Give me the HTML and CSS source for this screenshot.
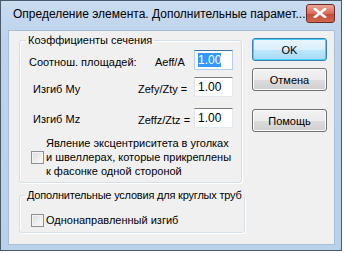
FILE: index.html
```html
<!DOCTYPE html>
<html lang="ru">
<head>
	<meta charset="UTF-8">
	<title>Определение элемента</title>
	<link rel="stylesheet" href="styles.css">
</head>
<body>
	<div id="window">
		<div class="titlebar">
			<span class="title">Определение элемента. Дополнительные парамет...</span>
			<span class="close">
				<svg width="14" height="10" viewBox="0 0 14 10">
					<path d="M2 1 L12 9 M12 1 L2 9" stroke="#fff" stroke-width="2.6" stroke-linecap="square"/>
				</svg>
			</span>
		</div>
		<div class="client">
			<div class="left">
				<fieldset class="group group-coef">
					<legend>Коэффициенты сечения</legend>
					<div class="row row-first">
						<span class="name name-area">Соотнош. площадей:</span>
						<span class="formula formula-area">Aeff/A</span>
						<span class="edit focused"><span class="sel">1.00</span></span>
					</div>
					<div class="row row-second">
						<span class="name name-bend">Изгиб My</span>
						<span class="formula">Zefy/Zty =</span>
						<span class="edit">1.00</span>
					</div>
					<div class="row row-third">
						<span class="name name-bend">Изгиб Mz</span>
						<span class="formula">Zeffz/Ztz =</span>
						<span class="edit">1.00</span>
					</div>
					<div class="check check-ecc">
						<span class="box"></span>
						<span class="check-text">Явление эксцентриситета в уголках<br>и швеллерах, которые прикреплены<br>к фасонке одной стороной</span>
					</div>
				</fieldset>
				<fieldset class="group group-pipe">
					<legend>Дополнительные условия для круглых труб</legend>
					<div class="check check-dir">
						<span class="box"></span>
						<span class="check-text">Однонаправленный изгиб</span>
					</div>
				</fieldset>
			</div>
			<div class="right">
				<button class="btn btn-default">OK</button>
				<button class="btn">Отмена</button>
				<button class="btn btn-help">Помощь</button>
			</div>
		</div>
	</div>
</body>
</html>
```

FILE: styles.css
```css
html, body {
	margin: 0;
	padding: 0;
	background-color: #fff;
}
body {
	font-family: "Liberation Sans", Arial, sans-serif;
	font-size: 11px;
	color: #000;
	white-space: nowrap;
}
#window {
	width: 340px;
	height: 249px;
	border: 1px solid #4a5a6a;
	background: linear-gradient(#c9dcf0, #bcd3eb 40px, #b9d1ea);
	display: flex;
	flex-direction: column;
}
.titlebar {
	height: 29px;
	display: flex;
	align-items: center;
	padding: 0 0 0 12px;
}
.title {
	font-size: 12px;
	flex: 1;
	margin-top: -3px;
}
.close {
	width: 31px;
	height: 17px;
	margin: -5px 6px 0 0;
	border: 1px solid #6d2b22;
	border-radius: 3px;
	background: linear-gradient(#eaa899, #d96b58 50%, #c54a35 51%, #d0664c);
	display: flex;
	align-items: center;
	justify-content: center;
}
.client {
	margin: 0 6px 0 7px;
	height: 213px;
	background-color: #f0f0f0;
	border: 1px solid #a9bfd6;
	display: flex;
}
.left {
	width: 223px;
	padding-left: 10px;
}
.group {
	margin: 0;
	padding: 0;
	border: 1px solid #d5dfe5;
	border-radius: 3px;
	box-shadow: inset 1px 1px 0 #fff, 1px 1px 0 #fff;
}
legend {
	padding: 0 2px;
	margin-left: 6px;
	line-height: 13px;
}
.group.group-coef {
	margin-top: 3px;
	padding-bottom: 4px;
}
.group.group-pipe {
	margin-top: 6px;
	padding-bottom: 5px;
}
.group-pipe legend {
	letter-spacing: -0.2px;
	margin-left: 5px;
}
.row {
	display: flex;
	align-items: center;
	height: 20px;
}
.row-first {
	margin-top: 3px;
}
.row-second {
	margin-top: 7px;
}
.row-third {
	margin-top: 11px;
}
.name, .formula {
	padding-top: 4px;
}
.row-third .name {
	padding-top: 1px;
}
.name-area {
	width: 126px;
	padding-left: 9px;
}
.name-bend {
	width: 105px;
	padding-left: 13px;
}
.formula {
	width: 56px;
}
.formula-area {
	width: 39px;
}
.edit {
	box-sizing: border-box;
	width: 39px;
	height: 20px;
	background-color: #fff;
	border: 1px solid #abadb3;
	border-top-color: #7a7a7a;
	border-left-color: #e2e3ea;
	border-right-color: #e3e9ef;
	border-bottom-color: #e3e9ef;
	padding: 2px 0 0 3px;
	font-size: 12px;
	line-height: 14px;
}
.focused {
	border-color: #3d7bad;
	border-left-color: #b5cfe7;
	border-right-color: #b5cfe7;
	border-bottom-color: #b5cfe7;
}
.sel {
	background-color: #3399ff;
	color: #fff;
}
.check {
	display: flex;
	align-items: center;
	padding-left: 11px;
}
.check-ecc {
	margin-top: 8px;
}
.check-dir {
	margin-top: 11px;
}
.box {
	box-sizing: border-box;
	width: 13px;
	height: 13px;
	border: 1px solid #8e8f8f;
	background: linear-gradient(135deg, #dcdcdc, #fbfbfb);
	box-shadow: inset 0 0 0 1px #f4f4f4;
	flex: none;
}
.check-text {
	line-height: 14px;
	padding-left: 2px;
}
.right {
	display: flex;
	flex-direction: column;
	padding: 7px 0 0 10px;
}
.btn {
	width: 75px;
	height: 23px;
	margin: 0 0 7px 0;
	padding: 0;
	font-family: "Liberation Sans", Arial, sans-serif;
	font-size: 11px;
	color: #000;
	border: 1px solid #707070;
	border-radius: 3px;
	background: linear-gradient(#f2f2f2, #ebebeb 50%, #dddddd 51%, #cfcfcf);
	box-shadow: inset 0 0 0 1px #fcfcfc;
}
.btn-default {
	border-color: #3c7fb1;
	box-shadow: inset 0 0 0 1px #48d0f8;
	background: linear-gradient(#eaf6fd, #d9f0fc 50%, #bee6fd 51%, #a7d9f5);
}
.btn-help {
	margin-top: 11px;
}
```
